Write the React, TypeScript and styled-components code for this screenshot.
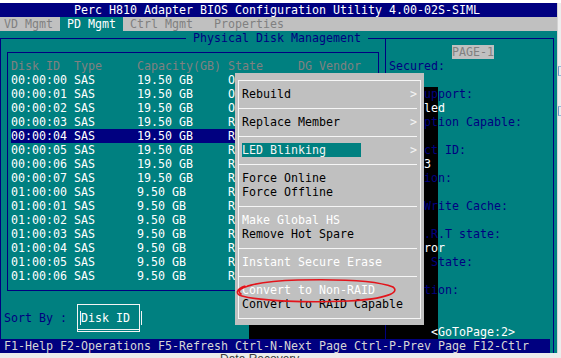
import React from "react";
import styled, { createGlobalStyle, css } from "styled-components";

const NAVY = "#000080";
const TEAL = "#008080";
const GREY = "#c0c0c0";
const DIM = "#808080";
const WHITE = "#ffffff";
const CW = 7;

const at = (c0: number, c1: number, r0: number, r1: number) => css`
  grid-column: ${c0 + 1} / ${c1 + 2};
  grid-row: ${r0 + 1} / ${r1 + 2};
`;

const GlobalStyle = createGlobalStyle`
  html, body { margin: 0; padding: 0; background: #f0f0f0; overflow: hidden; }
  body { font-family: "DejaVu Sans Mono", "Liberation Mono", monospace; }
`;

const Screen = styled.div`
  width: 561px;
  height: 358px;
  display: flex;
  flex-direction: column;
  background: #ffffff;
  overflow: hidden;
`;

const TopGap = styled.div`
  flex: none;
  height: 3px;
  background: #ffffff;
`;

const Middle = styled.div`
  flex: none;
  height: 350px;
  display: flex;
`;

const Console = styled.div`
  flex: none;
  margin-left: -3px;
  width: 560px;
  height: 350px;
  display: grid;
  grid-template-columns: repeat(80, ${CW}px);
  grid-template-rows: repeat(25, 14px);
  font-family: "DejaVu Sans Mono", "Liberation Mono", monospace;
  font-size: 11.63px;
  line-height: 14px;
  white-space: pre;
`;

const RightEdge = styled.div`
  flex: none;
  width: 4px;
  background: #ededed;
  border-left: 1px solid #d2d2d2;
  box-sizing: border-box;
  display: flex;
  flex-direction: column;
`;

const EdgeMark = styled.div<{ $top: number }>`
  margin-top: ${(p) => p.$top}px;
  height: 8px;
  border-top: 1px solid #9ab6d8;
  border-bottom: 1px solid #9ab6d8;
  border-left: 1px solid #6f93c2;
`;

const BottomStrip = styled.div`
  flex: none;
  height: 5px;
  background: #ececec;
  overflow: hidden;
  padding-left: 220px;
`;

const RecoveryLabel = styled.div`
  font-family: "Liberation Sans", Arial, sans-serif;
  font-size: 12px;
  line-height: 12px;
  color: #3a3a3a;
  margin-top: 0px;
`;

const TitleBar = styled.div`
  ${at(0, 79, 0, 0)}
  background: ${NAVY};
  color: ${WHITE};
  padding-left: ${11 * CW}px;
`;

const TabBar = styled.div`
  ${at(0, 79, 1, 1)}
  background: ${GREY};
  display: flex;
  padding-left: ${CW}px;
`;

const Tab = styled.div<{ $cols: number; $active?: boolean }>`
  width: ${(p) => p.$cols * CW}px;
  flex: none;
  background: ${(p) => (p.$active ? TEAL : "transparent")};
  color: ${(p) => (p.$active ? WHITE : DIM)};
`;

const Desk = styled.div`
  ${at(0, 79, 2, 24)}
  background: ${TEAL};
`;

const OuterFrame = styled.div`
  ${at(0, 79, 2, 24)}
  margin: 7px 3px 0 3px;
  border: 1px solid ${NAVY};
  border-bottom: none;
`;

const FrameTitle = styled.div`
  ${at(27, 52, 2, 2)}
  background: ${TEAL};
  color: ${NAVY};
`;

const DiskBox = styled.div`
  ${at(1, 54, 3, 20)}
  margin: 7px 3px 6px 3px;
  border: 1px solid ${NAVY};
`;

const DiskList = styled.div`
  ${at(2, 53, 4, 19)}
  display: flex;
  flex-direction: column;
`;

const DiskRow = styled.div<{ $head?: boolean; $selected?: boolean }>`
  height: 14px;
  display: flex;
  background: ${(p) => (p.$selected ? NAVY : "transparent")};
  color: ${(p) => (p.$head ? DIM : WHITE)};
`;

const Cell = styled.span<{ $cols: number }>`
  width: ${(p) => p.$cols * CW}px;
  flex: none;
  overflow: hidden;
`;

const PanelDivider = styled.div`
  ${at(55, 55, 2, 24)}
  margin: 7px 0 0 3px;
  border-left: 1px solid ${NAVY};
  z-index: 2;
`;

const PanelInfo = styled.div`
  ${at(56, 78, 3, 23)}
  display: flex;
  flex-direction: column;
  z-index: 2;
`;

const InfoLine = styled.div<{ $tone: "label" | "value"; $indent?: number }>`
  height: 14px;
  color: ${(p) => (p.$tone === "label" ? NAVY : WHITE)};
  padding-left: ${(p) => (p.$indent ?? 0) * CW}px;
`;

const PageBadge = styled.span`
  margin-left: ${9 * CW}px;
  background: ${GREY};
  color: ${DIM};
`;

const SortLabel = styled.div`
  ${at(1, 9, 22, 22)}
  color: ${NAVY};
`;

const SortBox = styled.div`
  ${at(11, 20, 21, 23)}
  margin: 7px 4px 7px 3px;
  border: 1px solid #f4f4f4;
  border-bottom: 3px double #f4f4f4;
`;

const SortFace = styled.div`
  ${at(11, 20, 22, 22)}
  margin: 0 2px 0 6px;
  border-left: 1px solid #f4f4f4;
  border-right: 1px solid #f4f4f4;
  color: ${WHITE};
`;

const Footer = styled.div`
  ${at(0, 78, 24, 24)}
  background: ${NAVY};
  color: #d6d6d6;
  padding-left: ${CW}px;
  z-index: 5;
`;

const Shadow = styled.div<{ $c0: number; $c1: number; $r0: number; $r1: number }>`
  ${(p) => at(p.$c0, p.$c1, p.$r0, p.$r1)}
  background: #000000;
  z-index: 1;
`;

const PopupBox = styled.div`
  ${at(34, 60, 5, 22)}
  background: ${GREY};
  z-index: 3;
`;

const PopupFrame = styled.div`
  ${at(34, 60, 5, 22)}
  margin: 7px 3px 6px 3px;
  border: 1px solid #f6f6f6;
  z-index: 4;
`;

const PopupMenu = styled.div`
  ${at(35, 59, 6, 21)}
  display: flex;
  flex-direction: column;
  z-index: 4;
`;

const MenuItem = styled.div<{ $disabled?: boolean }>`
  height: 14px;
  display: flex;
  justify-content: space-between;
  color: ${(p) => (p.$disabled ? WHITE : "#000000")};
`;

const MenuLabel = styled.span<{ $active?: boolean }>`
  width: ${17 * CW}px;
  background: ${(p) => (p.$active ? TEAL : "transparent")};
  color: ${(p) => (p.$active ? "#f4f4f4" : "inherit")};
`;

const Chevron = styled.span`
  width: ${CW}px;
  color: #f4f4f4;
`;

const MenuSeparator = styled.div`
  height: 14px;
  margin-left: -4px;
  background: linear-gradient(#f6f6f6, #f6f6f6) no-repeat 0 7px / 100% 1px;
`;

const Annotation = styled.svg`
  ${at(33, 58, 19, 21)}
  width: 182px;
  height: 42px;
  z-index: 6;
  overflow: visible;
`;

type Disk = { id: string; size: string; state: string; dg: string };

const disks: Disk[] = [
  ...["00", "01", "02", "03", "04", "05", "06", "07"].map((n, i) => ({
    id: `00:00:${n}`,
    size: "19.50 GB",
    state: i < 3 ? "Online" : "Ready",
    dg: i < 3 ? "00" : "--",
  })),
  ...["00", "01", "02", "03", "04", "05", "06"].map((n) => ({
    id: `01:00:${n}`,
    size: "9.50 GB",
    state: "Ready",
    dg: "--",
  })),
];

type MenuEntry =
  | { kind: "sep" }
  | { kind: "item"; label: string; sub?: boolean; active?: boolean; disabled?: boolean };

const menu: MenuEntry[] = [
  { kind: "item", label: "Rebuild", sub: true },
  { kind: "sep" },
  { kind: "item", label: "Replace Member", sub: true },
  { kind: "sep" },
  { kind: "item", label: "LED Blinking", sub: true, active: true },
  { kind: "sep" },
  { kind: "item", label: "Force Online" },
  { kind: "item", label: "Force Offline" },
  { kind: "sep" },
  { kind: "item", label: "Make Global HS", disabled: true },
  { kind: "item", label: "Remove Hot Spare" },
  { kind: "sep" },
  { kind: "item", label: "Instant Secure Erase", disabled: true },
  { kind: "sep" },
  { kind: "item", label: "Convert to Non-RAID", disabled: true },
  { kind: "item", label: "Convert to RAID Capable" },
];

const info: Array<{ text: string; tone: "label" | "value"; indent?: number }> = [
  { text: "Secured:", tone: "label" },
  { text: "No", tone: "value" },
  { text: "SED Support:", tone: "label" },
  { text: "Disabled", tone: "value" },
  { text: "Encryption Capable:", tone: "label" },
  { text: "No", tone: "value" },
  { text: "Product ID:", tone: "label" },
  { text: "SIML03", tone: "value" },
  { text: "Revision:", tone: "label" },
  { text: "A00", tone: "value" },
  { text: "Disk Write Cache:", tone: "label" },
  { text: "N/A", tone: "value" },
  { text: "S.M.A.R.T state:", tone: "label" },
  { text: "No Error", tone: "value" },
  { text: "Power State:", tone: "label" },
  { text: "On", tone: "value" },
  { text: "Operation:", tone: "label" },
  { text: "None", tone: "value" },
  { text: "", tone: "value" },
  { text: "<GoToPage:2>", tone: "value", indent: 6 },
];

export default function App() {
  return (
    <Screen>
      <GlobalStyle />
      <TopGap />
      <Middle>
        <Console>
          <TitleBar>Perc H810 Adapter BIOS Configuration Utility 4.00-02S-SIML</TitleBar>
          <TabBar>
            <Tab $cols={8}>VD Mgmt</Tab>
            <Tab $cols={9} $active>
              {" PD Mgmt "}
            </Tab>
            <Tab $cols={12}>{" Ctrl Mgmt"}</Tab>
            <Tab $cols={12}>{" Properties"}</Tab>
          </TabBar>

          <Desk />
          <OuterFrame />
          <FrameTitle>{" Physical Disk Management "}</FrameTitle>
          <DiskBox />
          <DiskList>
            <DiskRow $head>
              <Cell $cols={9}>Disk ID</Cell>
              <Cell $cols={9}>Type</Cell>
              <Cell $cols={13}>Capacity(GB)</Cell>
              <Cell $cols={10}>State</Cell>
              <Cell $cols={3}>DG</Cell>
              <Cell $cols={8}>Vendor</Cell>
            </DiskRow>
            {disks.map((d, i) => (
              <DiskRow key={d.id} $selected={i === 4}>
                <Cell $cols={9}>{d.id}</Cell>
                <Cell $cols={9}>SAS</Cell>
                <Cell $cols={13}>{d.size}</Cell>
                <Cell $cols={10}>{d.state}</Cell>
                <Cell $cols={3}>{d.dg}</Cell>
                <Cell $cols={8}>DELL</Cell>
              </DiskRow>
            ))}
          </DiskList>

          <PanelDivider />
          <PanelInfo>
            <InfoLine $tone="value">
              <PageBadge>PAGE-1</PageBadge>
            </InfoLine>
            {info.map((l, i) => (
              <InfoLine key={i} $tone={l.tone} $indent={l.indent}>
                {l.text}
              </InfoLine>
            ))}
          </PanelInfo>

          <SortLabel>Sort By :</SortLabel>
          <SortBox />
          <SortFace>Disk ID</SortFace>

          <Shadow $c0={61} $c1={62} $r0={6} $r1={23} />
          <Shadow $c0={36} $c1={60} $r0={23} $r1={23} />

          <PopupBox />
          <PopupFrame />
          <PopupMenu>
            {menu.map((m, i) =>
              m.kind === "sep" ? (
                <MenuSeparator key={i} />
              ) : (
                <MenuItem key={i} $disabled={m.disabled}>
                  <MenuLabel $active={m.active}>{m.label}</MenuLabel>
                  {m.sub && <Chevron>&gt;</Chevron>}
                </MenuItem>
              )
            )}
          </PopupMenu>

          <Annotation viewBox="0 0 182 42">
            <path
              d="M 13 25 C 4 19, 30 12, 70 11 C 112 10, 150 12, 165 18 C 172 23, 160 30, 120 32 C 80 34, 32 32, 14 27 C 7 25, 8 20, 17 17"
              fill="none"
              stroke="#e3141b"
              strokeWidth="1.6"
              strokeLinecap="round"
            />
          </Annotation>

          <Footer>F1-Help F2-Operations F5-Refresh Ctrl-N-Next Page Ctrl-P-Prev Page F12-Ctlr</Footer>
        </Console>
        <RightEdge>
          <EdgeMark $top={63} />
          <EdgeMark $top={30} />
        </RightEdge>
      </Middle>
      <BottomStrip>
        <RecoveryLabel>Data Recovery</RecoveryLabel>
      </BottomStrip>
    </Screen>
  );
}
